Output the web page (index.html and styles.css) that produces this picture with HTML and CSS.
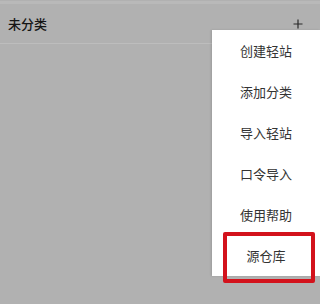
FILE: index.html
```html
<!DOCTYPE html>
<html lang="zh-CN">
<head>
    <meta charset="UTF-8">
    <meta name="viewport" content="width=device-width, initial-scale=1.0">
    <title>未分类</title>
    <link rel="stylesheet" href="styles.css">
</head>
<body>
    <!-- Category header -->
    <div class="categoryHeader">
        <span class="categoryTitle">未分类</span>
        <svg class="addIcon" width="10" height="10" viewBox="0 0 10 10">
            <path d="M5 0.5V9.5M0.5 5H9.5" stroke="#2a2a2a" stroke-width="1.2" fill="none"/>
        </svg>
    </div>

    <!-- Popup menu -->
    <div class="popupMenu">
        <div class="menuItem">创建轻站</div>
        <div class="menuItem">添加分类</div>
        <div class="menuItem">导入轻站</div>
        <div class="menuItem">口令导入</div>
        <div class="menuItem">使用帮助</div>
        <div class="menuItem highlighted">源仓库</div>
    </div>
</body>
</html>
```

FILE: styles.css
```css
body {
    margin: 0;
    height: 304px;
    background-color: #b1b1b1;
    font-family: "Noto Sans CJK SC", "Noto Sans", sans-serif;
    overflow: hidden;
}

.categoryHeader {
    height: 43px;
    margin-top: 1px;
    padding: 0 17px 0 8px;
    display: flex;
    align-items: center;
    justify-content: space-between;
    border-bottom: 1px solid #bdbdbd;
    border-top: 3px solid #b9b9b9;
    box-sizing: border-box;
}

.categoryTitle {
    font-size: 13px;
    font-weight: 500;
    color: #151515;
}

.addIcon {
    display: block;
}

.popupMenu {
    position: absolute;
    top: 30px;
    right: 0;
    width: 108px;
    background-color: #ffffff;
    box-shadow: -1px 0 2px rgba(0, 0, 0, 0.12);
}

.menuItem {
    height: 41px;
    display: flex;
    align-items: center;
    justify-content: center;
    font-size: 13px;
    color: #333333;
    position: relative;
}

.menuItem.highlighted::after {
    content: "";
    position: absolute;
    top: -3px;
    left: 11px;
    width: 92px;
    height: 51px;
    border: 4px solid #d3121c;
    border-radius: 2px;
    box-sizing: border-box;
}
```
